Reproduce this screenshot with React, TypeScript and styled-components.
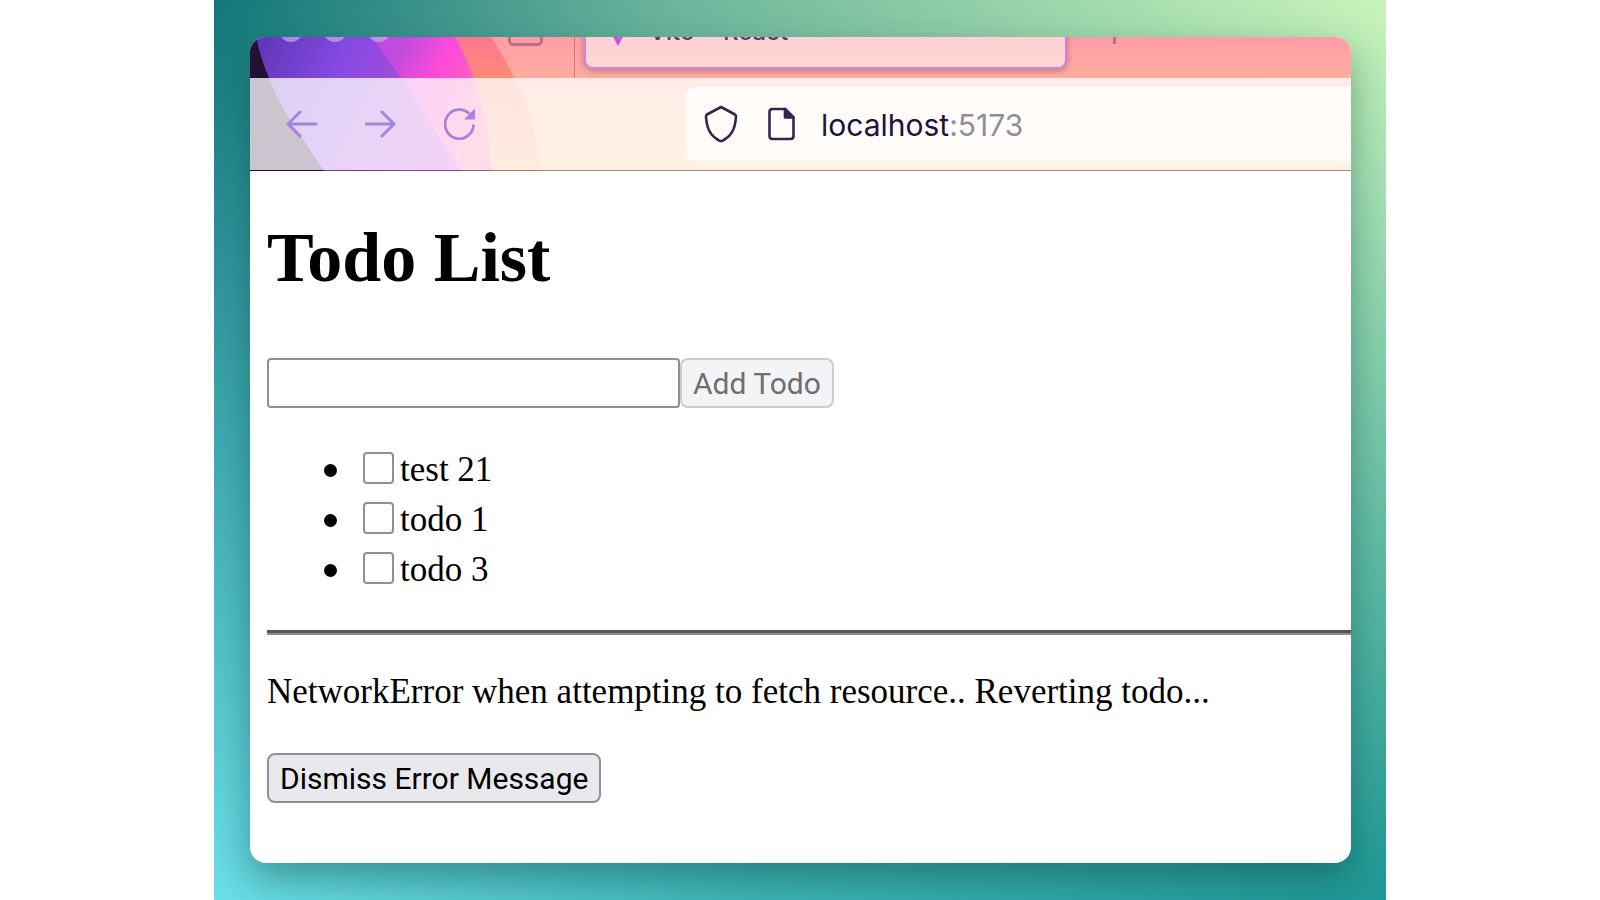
import React, { useState } from "react";
import styled, { createGlobalStyle } from "styled-components";

const serif = `"Liberation Serif", "Times New Roman", serif`;
const chromeFont = `Inter, "Open Sans", sans-serif`;
const controlFont = `Roboto, "Open Sans", sans-serif`;

const GlobalStyle = createGlobalStyle`
  *, *::before, *::after { box-sizing: border-box; }
  body { margin: 0; background: #fff; font-family: ${serif}; color: #000; }
`;

const Backdrop = styled.div`
  position: relative;
  isolation: isolate;
  width: 100%;
  max-width: 1172px;
  min-height: 100vh;
  margin: 0 auto;
  padding: 37px 35px 37px 36px;
  display: flex;
  overflow: hidden;
  background: linear-gradient(90deg, #6ce0e8 0%, #3fb5b8 45%, #1e9896 100%);

  &::before {
    content: "";
    position: absolute;
    inset: 0;
    z-index: -1;
    background: linear-gradient(90deg, #12757a 0%, #6ab39a 38%, #c9f4ba 100%);
    mask-image: linear-gradient(180deg, #000 0%, transparent 100%);
  }
`;

const BrowserWindow = styled.div`
  flex: 1;
  min-width: 0;
  display: flex;
  flex-direction: column;
  overflow: hidden;
  border-radius: 16px;
  background: #fff;
  box-shadow: 0 16px 36px rgba(0, 50, 50, 0.38);
`;

const Chrome = styled.header`
  position: relative;
  isolation: isolate;
  overflow: hidden;
  padding-bottom: 1px;
  background: linear-gradient(180deg, #ff9ba8 0%, #ffae9e 31%, #ffc987 100%);
`;

const ThemeArt = styled.svg`
  position: absolute;
  top: 0;
  left: 0;
  z-index: -1;
`;

const TabStrip = styled.div`
  height: 41px;
  padding: 0 32px 9px 29px;
  display: flex;
  align-items: flex-end;
  overflow: hidden;
`;

const StripItem = styled.div`
  flex: none;
  height: 78px;
  display: flex;
  align-items: center;
`;

const Lights = styled(StripItem)`
  width: 229px;
  gap: 20px;
`;

const Light = styled.span`
  width: 24px;
  height: 24px;
  border-radius: 50%;
  background: rgba(200, 170, 235, 0.7);
`;

const SidebarSlot = styled(StripItem)`
  width: 66px;
`;

const Divider = styled.span`
  flex: none;
  width: 1px;
  height: 87px;
  margin: 0 9px -9px 0;
  background: rgba(120, 60, 70, 0.4);
`;

const Tab = styled(StripItem)`
  width: 483px;
  padding: 0 17px;
  gap: 16px;
  border: 2px solid #cb86dc;
  border-radius: 9px;
  background: rgba(255, 255, 255, 0.52);
  box-shadow: 0 2px 6px rgba(100, 40, 60, 0.4);
  font: 500 24px/30px ${chromeFont};
  color: #5b3a63;
`;

const TabTitle = styled.span`
  padding-top: 4px;
`;

const NewTab = styled(StripItem)`
  margin-left: 34px;
`;

const Toolbar = styled.div`
  height: 92px;
  padding: 9px 0 9px 36px;
  display: flex;
  align-items: center;
  gap: 47px;
  background: rgba(255, 255, 255, 0.76);
  box-shadow: 0 1px rgba(50, 10, 60, 0.35);
`;

const NavButton = styled.button`
  flex: none;
  width: 32px;
  height: 32px;
  padding: 0;
  border: 0;
  background: none;
  color: #a683dd;

  svg { display: block; }
`;

const AddressBar = styled.div`
  flex: 1;
  min-width: 0;
  align-self: stretch;
  margin-left: 163px;
  padding-left: 18px;
  display: flex;
  align-items: center;
  gap: 30px;
  border-radius: 9px 0 0 9px;
  background: rgba(255, 255, 255, 0.8);
  color: #33254f;

  svg { flex: none; }
`;

const Url = styled.span`
  margin-left: -4px;
  padding-top: 2px;
  font: 400 30px/40px ${chromeFont};
  color: #20123a;
`;

const Port = styled.span`
  color: #918ca0;
`;

const Page = styled.main`
  flex: 1;
  padding: 47px 0 60px 17px;
`;

const Title = styled.h1`
  margin: 0 0 60px;
  font-size: 70px;
  line-height: 80px;
`;

const Form = styled.form`
  display: flex;
`;

const TextInput = styled.input`
  width: 413px;
  height: 50px;
  padding: 0 8px;
  border: 2px solid #8f8f9d;
  border-radius: 4px;
  background: #fff;
  font: 30px ${controlFont};
`;

const Button = styled.button`
  height: 50px;
  padding: 2px 11px 0;
  border: 2px solid #8f8f9d;
  border-radius: 8px;
  background: #e9e9ed;
  font: 400 30px/44px ${controlFont};
  color: #000;

  &:disabled {
    border-color: #cbcbd2;
    background: #f4f4f7;
    color: #6e6e6e;
  }
`;

const List = styled.ul`
  list-style: none;
  margin: 37px 0 35px;
  padding: 0 0 0 57px;
`;

const Item = styled.li`
  height: 50px;
  display: flex;
  align-items: center;
  font-size: 35px;
  line-height: 50px;

  &::before {
    content: "";
    width: 13px;
    height: 13px;
    margin-right: 26px;
    border-radius: 50%;
    background: #000;
  }
`;

const ItemLabel = styled.label`
  display: flex;
  align-items: center;
  gap: 6px;
`;

const Checkbox = styled.input`
  appearance: none;
  width: 31px;
  height: 32px;
  margin: 0 0 5px;
  border: 2px solid #8f8f9d;
  border-radius: 4px;
  background: #fff;

  &:checked { background: #0060df; }
`;

const Rule = styled.hr`
  height: 5px;
  margin: 0;
  border: 0;
  border-top: 3px solid #565656;
  background: #8e8e8e;
`;

const Message = styled.p`
  margin: 37px 0 41px;
  font-size: 35px;
  line-height: 40px;
`;

const AlpenglowArt = () => (
  <ThemeArt width="300" height="134" viewBox="250 37 300 134" aria-hidden="true">
    <defs>
      <linearGradient id="orange" x1="0" y1="0" x2="0" y2="1">
        <stop offset="0" stopColor="#ff7590" />
        <stop offset="0.3" stopColor="#ff8b78" />
        <stop offset="1" stopColor="#ffad78" />
      </linearGradient>
      <linearGradient id="pink" gradientUnits="userSpaceOnUse" x1="395" y1="60" x2="500" y2="120">
        <stop offset="0" stopColor="#c14bdd" />
        <stop offset="0.36" stopColor="#ff4bd8" />
        <stop offset="1" stopColor="#ff72a0" />
      </linearGradient>
      <linearGradient id="purple" gradientUnits="userSpaceOnUse" x1="262" y1="40" x2="440" y2="130">
        <stop offset="0" stopColor="#6037b8" />
        <stop offset="0.4" stopColor="#854ae2" />
        <stop offset="1" stopColor="#c44bd4" />
      </linearGradient>
    </defs>
    <path d="M250 37H491Q532 98 542 171H250Z" fill="url(#orange)" />
    <path d="M250 37H455Q487 94 491 171H250Z" fill="url(#pink)" />
    <path d="M250 37H372L401 78L461 171H250Z" fill="url(#purple)" />
    <path d="M250 37H256C259 52 264 66 269 78C275 94 282 107 290 120L324 171H250Z" fill="#221035" />
  </ThemeArt>
);

const BackIcon = () => (
  <svg width="32" height="32" viewBox="0 0 32 32" fill="none" stroke="currentColor" strokeWidth="3" strokeLinejoin="round" strokeLinecap="round">
    <path d="M30 16H3M14 4L2 16L14 28" />
  </svg>
);

const ForwardIcon = () => (
  <svg width="32" height="32" viewBox="0 0 32 32" fill="none" stroke="currentColor" strokeWidth="3" strokeLinejoin="round" strokeLinecap="round">
    <path d="M1 16H28M17 4L29 16L17 28" />
  </svg>
);

const ReloadIcon = () => (
  <svg width="32" height="32" viewBox="0 0 32 32" fill="none" stroke="currentColor" strokeWidth="2.800">
    <path d="M29.500 16.500A14.200 14.600 0 1 1 25.500 6" />
    <path d="M31 0.500V11.500H20Z" fill="currentColor" stroke="none" />
  </svg>
);

const ShieldIcon = () => (
  <svg width="34" height="38" viewBox="0 0 34 38" fill="none" stroke="currentColor" strokeWidth="2.600" strokeLinejoin="round">
    <path d="M17 2L31 9.500Q32.200 10.200 32 12C31 25 27 31 19 35.500Q17 36.700 15 35.500C7 31 3 25 2 12Q1.800 10.200 3 9.500Z" />
  </svg>
);

const DocumentIcon = () => (
  <svg width="27" height="34" viewBox="0 0 27 34" fill="none" stroke="currentColor" strokeWidth="2.600" strokeLinejoin="round">
    <path d="M4.500 2H17L25.500 10.500V29Q25.500 32 22.500 32H4.500Q1.500 32 1.500 29V5Q1.500 2 4.500 2Z" />
    <path d="M17 2V10.500H25.500Z" fill="currentColor" />
  </svg>
);

const SidebarIcon = () => (
  <svg width="35" height="32" viewBox="0 0 35 32" fill="none" stroke="#b96f80" strokeWidth="3">
    <rect x="1.500" y="1.500" width="32" height="29" rx="4" />
  </svg>
);

const ViteIcon = () => (
  <svg width="30" height="32" viewBox="0 0 30 32">
    <path d="M0 3L15 32L30 3L15 6Z" fill="#c94be8" />
    <path d="M12 8L20 6L16 26Z" fill="#ff9c6a" />
  </svg>
);

const PlusIcon = () => (
  <svg width="27" height="27" viewBox="0 0 27 27" stroke="#b96f88" strokeWidth="3">
    <path d="M13.500 0V27M0 13.500H27" />
  </svg>
);

const initialTodos = [
  { id: 1, title: "test 21", done: false },
  { id: 2, title: "todo 1", done: false },
  { id: 3, title: "todo 3", done: false },
];

export default function App() {
  const [text, setText] = useState("");
  const [todos, setTodos] = useState(initialTodos);
  const [error, setError] = useState("NetworkError when attempting to fetch resource.. Reverting todo...");

  const toggle = (id: number) =>
    setTodos((list) => list.map((t) => (t.id === id ? { ...t, done: !t.done } : t)));

  const add = (event: React.FormEvent) => {
    event.preventDefault();
    setTodos((list) => [...list, { id: Date.now(), title: text, done: false }]);
    setText("");
  };

  return (
    <>
      <GlobalStyle />
      <Backdrop>
        <BrowserWindow>
          <Chrome>
            <AlpenglowArt />
            <TabStrip>
              <Lights>
                <Light />
                <Light />
                <Light />
              </Lights>
              <SidebarSlot>
                <SidebarIcon />
              </SidebarSlot>
              <Divider />
              <Tab>
                <ViteIcon />
                <TabTitle>Vite + React</TabTitle>
              </Tab>
              <NewTab>
                <PlusIcon />
              </NewTab>
            </TabStrip>
            <Toolbar>
              <NavButton type="button" aria-label="Back"><BackIcon /></NavButton>
              <NavButton type="button" aria-label="Forward"><ForwardIcon /></NavButton>
              <NavButton type="button" aria-label="Reload"><ReloadIcon /></NavButton>
              <AddressBar>
                <ShieldIcon />
                <DocumentIcon />
                <Url>localhost<Port>:5173</Port></Url>
              </AddressBar>
            </Toolbar>
          </Chrome>
          <Page>
            <Title>Todo List</Title>
            <Form onSubmit={add}>
              <TextInput aria-label="New todo" value={text} onChange={(e) => setText(e.target.value)} />
              <Button type="submit" disabled={text === ""}>Add Todo</Button>
            </Form>
            <List>
              {todos.map((todo) => (
                <Item key={todo.id}>
                  <ItemLabel>
                    <Checkbox type="checkbox" checked={todo.done} onChange={() => toggle(todo.id)} />
                    {todo.title}
                  </ItemLabel>
                </Item>
              ))}
            </List>
            {error && (
              <>
                <Rule />
                <Message>{error}</Message>
                <Button type="button" onClick={() => setError("")}>Dismiss Error Message</Button>
              </>
            )}
          </Page>
        </BrowserWindow>
      </Backdrop>
    </>
  );
}
